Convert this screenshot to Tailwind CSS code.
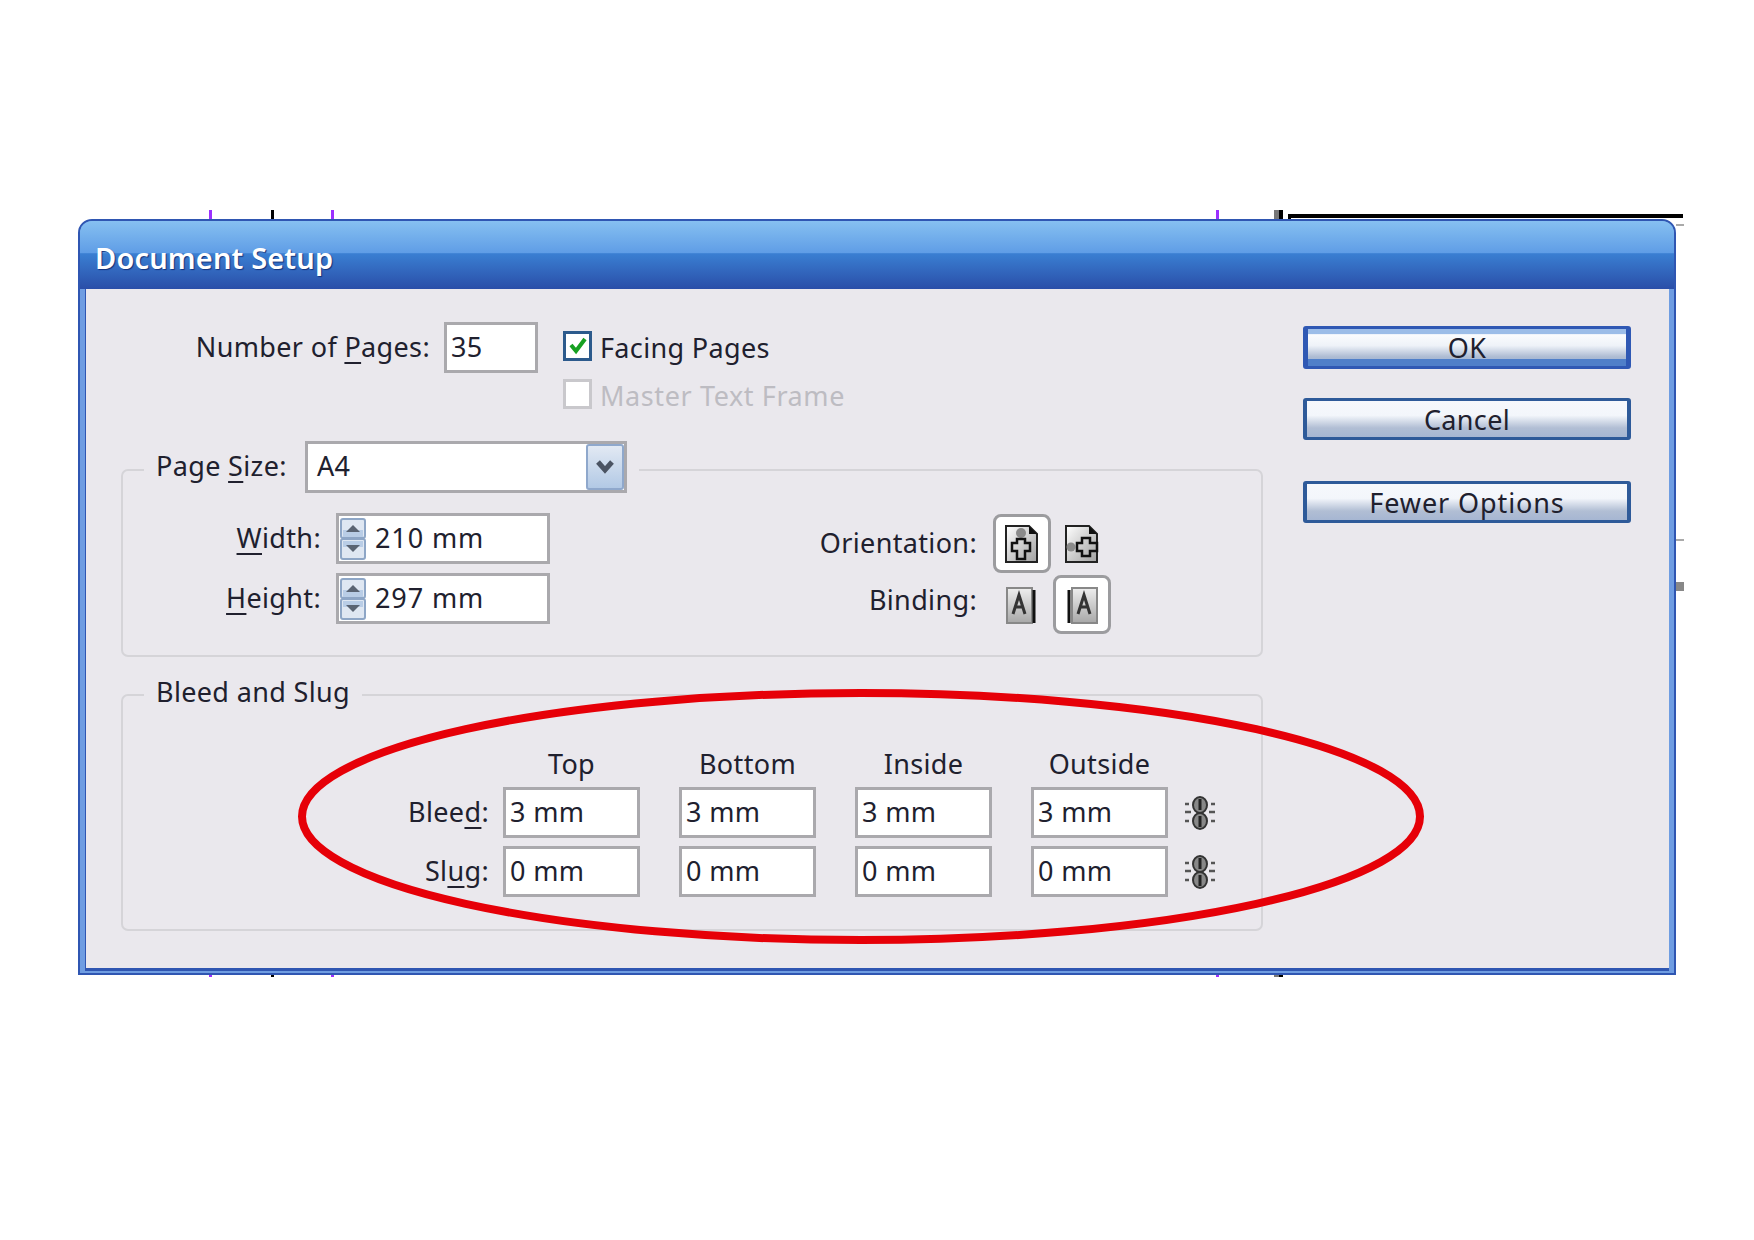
<!doctype html>
<html><head><meta charset="utf-8"><script src="https://cdn.jsdelivr.net/npm/@tailwindcss/browser@4"></script></head>
<body class="m-0 bg-white">
<div class="relative w-[1754px] h-[1240px] overflow-hidden bg-white font-['Noto_Sans','Liberation_Sans',sans-serif] text-[27px] tracking-[0.35px] leading-none text-[#20202e]">
  <!-- artwork behind the dialog -->
  <div class="absolute left-[209px] top-[210px] w-[3px] h-[767px] bg-[#9b30ff]"></div>
  <div class="absolute left-[271px] top-[210px] w-[3px] h-[767px] bg-black"></div>
  <div class="absolute left-[331px] top-[210px] w-[3px] h-[767px] bg-[#9b30ff]"></div>
  <div class="absolute left-[1216px] top-[210px] w-[3px] h-[767px] bg-[#9b30ff]"></div>
  <div class="absolute left-[1274px] top-[210px] w-[5px] h-[767px] bg-[#777]"></div>
  <div class="absolute left-[1279px] top-[210px] w-[4px] h-[767px] bg-black"></div>
  <div class="absolute left-[1288px] top-[214px] w-[395px] h-[10px] border-t-[4px] border-l-[3px] border-black"></div>
  <div class="absolute left-[1676px] top-[224px] w-[8px] h-[2px] bg-[#aaa]"></div>
  <div class="absolute left-[1676px] top-[539px] w-[8px] h-[2px] bg-[#aaa]"></div>
  <div class="absolute left-[1676px] top-[582px] w-[8px] h-[9px] bg-[#888]"></div>

  <!-- dialog -->
  <div class="relative ml-[78px] top-[219px] w-[1598px] h-[756px] rounded-t-[14px] border-2 border-[#2f56b2] bg-[#6f9de2] overflow-hidden flex flex-col">
    <div class="h-[68px] pl-[15px] pr-[6px] pt-[4px] flex items-center shrink-0 bg-[linear-gradient(to_bottom,#86c0f1_0%,#5f9de6_47%,#3a7fd2_48%,#2a4ea8_100%)]">
      <span class="text-[29px] font-semibold text-white [text-shadow:1px_1px_1px_#12307a] tracking-[0.15px]">Document Setup</span>
    </div>
    <div class="ml-[5px] mr-[5px] h-[682px] flex bg-[#eae8ed] border-l-[1px] border-b-[3px] border-[#2f56b2]">
      <!-- left column -->
      <div class="ml-[35px] w-[1142px]">
        <div class="mt-[33px] flex items-start">
          <div class="w-[309px] h-[51px] pb-[3px] flex items-center justify-end">Number of&nbsp;<span class="underline underline-offset-[5px] decoration-2">P</span>ages:</div>
          <div class="ml-[14px] w-[94px] h-[51px] pb-[3px] border-[3px] border-[#aaa9ad] bg-white flex items-center pl-[4px]">35</div>
          <div class="ml-[25px] pt-[9px] flex flex-col gap-[18px]">
            <div class="flex items-center h-[30px] gap-[8px]">
              <div class="w-[29px] h-[30px] border-[3px] border-[#2c5a8c] bg-white flex items-center justify-center">
                <svg width="20" height="20" viewBox="0 0 20 20"><path d="M3 9 L8 15 L17 3" fill="none" stroke="#17a022" stroke-width="4"/></svg>
              </div>
              <span class="pt-[3px]">Facing Pages</span>
            </div>
            <div class="flex items-center h-[30px] gap-[8px]">
              <div class="w-[29px] h-[30px] border-[3px] border-[#c9c8cc] bg-white"></div>
              <span class="pt-[3px] tracking-[0.6px] text-[#bdbcc2]">Master Text Frame</span>
            </div>
          </div>
        </div>

        <!-- Page Size group -->
        <div class="mt-[60px] h-[188px] border-2 border-[#d5d4d8] rounded-[7px]">
          <div class="-mt-[30px] ml-[21px] w-fit px-[12px] flex items-center bg-[#eae8ed]">
            <div class="w-[133px] pb-[3px] whitespace-nowrap">Page <span class="underline underline-offset-[5px] decoration-2">S</span>ize:</div>
            <div class="ml-[16px] w-[322px] h-[52px] border-[3px] border-[#aaa9ad] bg-white flex items-center justify-between pl-[9px]">
              <span class="pb-[3px]">A4</span>
              <div class="w-[38px] h-[46px] border-2 border-[#8fa8cc] rounded-[3px] bg-[linear-gradient(to_bottom,#e2e9f3,#b2c9e5)] flex items-center justify-center">
                <svg width="20" height="14" viewBox="0 0 20 14"><path d="M3 2 L10 10 L17 2" fill="none" stroke="#4b5463" stroke-width="5"/></svg>
              </div>
            </div>
          </div>
          <div class="mt-[20px] flex items-start">
            <div class="flex flex-col gap-[9px]">
              <div class="flex items-center">
                <div class="w-[198px] pb-[3px] text-right"><span class="underline underline-offset-[5px] decoration-2">W</span>idth:</div>
                <div class="ml-[15px] w-[214px] h-[51px] border-[3px] border-[#aaa9ad] bg-white flex items-center gap-[8px]">
                  <svg width="28" height="42" viewBox="0 0 28 42"><rect x="2" y="1" width="24" height="19" rx="2" fill="#dfe7f2" stroke="#8ea6c6" stroke-width="2"/><rect x="2" y="21" width="24" height="20" rx="2" fill="#dfe7f2" stroke="#8ea6c6" stroke-width="2"/><rect x="4" y="12" width="20" height="7" fill="#b9cde6"/><rect x="4" y="23" width="20" height="6" fill="#b9cde6"/><path d="M14 7 L21 14 H7 Z" fill="#5a6473"/><path d="M7 27 H21 L14 34 Z" fill="#5a6473"/></svg>
                  <span class="pb-[3px] tracking-[0.9px]">210 mm</span>
                </div>
              </div>
              <div class="flex items-center">
                <div class="w-[198px] pb-[3px] text-right"><span class="underline underline-offset-[5px] decoration-2">H</span>eight:</div>
                <div class="ml-[15px] w-[214px] h-[51px] border-[3px] border-[#aaa9ad] bg-white flex items-center gap-[8px]">
                  <svg width="28" height="42" viewBox="0 0 28 42"><rect x="2" y="1" width="24" height="19" rx="2" fill="#dfe7f2" stroke="#8ea6c6" stroke-width="2"/><rect x="2" y="21" width="24" height="20" rx="2" fill="#dfe7f2" stroke="#8ea6c6" stroke-width="2"/><rect x="4" y="12" width="20" height="7" fill="#b9cde6"/><rect x="4" y="23" width="20" height="6" fill="#b9cde6"/><path d="M14 7 L21 14 H7 Z" fill="#5a6473"/><path d="M7 27 H21 L14 34 Z" fill="#5a6473"/></svg>
                  <span class="pb-[3px] tracking-[0.9px]">297 mm</span>
                </div>
              </div>
            </div>
            <div class="ml-[127px] flex flex-col">
              <div class="mt-[1px] flex items-center">
                <div class="w-[300px] pb-[2px] text-right">Orientation:</div>
                <div class="ml-[16px] w-[58px] h-[59px] border-[3px] border-[#9c9c9f] rounded-[8px] bg-white flex items-center justify-center">
                  <svg class="mt-[3px]" width="36" height="42" viewBox="0 0 36 42"><defs><linearGradient id="pg1" x1="0" y1="0" x2="1" y2="1"><stop offset="0" stop-color="#fff"/><stop offset="1" stop-color="#a0a0a0"/></linearGradient></defs><path d="M2 2 H25 L33 10 V38 H2 Z" fill="url(#pg1)" stroke="#222" stroke-width="2"/><path d="M25 2 V10 H33 Z" fill="#111"/><circle cx="17" cy="9" r="5" fill="#8a8a8a"/><path d="M13 15 H21 V19 H26 V27 H21 V35 H13 V27 H8 V19 H13 Z" fill="none" stroke="#111" stroke-width="2.5"/></svg>
                </div>
                <div class="ml-[2px] w-[58px] h-[59px] flex items-center justify-center">
                  <svg class="mt-[3px]" width="36" height="42" viewBox="0 0 36 42"><defs><linearGradient id="pg2" x1="0" y1="0" x2="1" y2="1"><stop offset="0" stop-color="#fff"/><stop offset="1" stop-color="#a0a0a0"/></linearGradient></defs><path d="M2 2 H25 L33 10 V38 H2 Z" fill="url(#pg2)" stroke="#222" stroke-width="2"/><path d="M25 2 V10 H33 Z" fill="#111"/><circle cx="7" cy="23" r="4.5" fill="#8a8a8a"/><path d="M13 19 H18 V14 H26 V19 H33 V27 H26 V32 H18 V27 H13 Z" fill="none" stroke="#111" stroke-width="2.5"/></svg>
                </div>
              </div>
              <div class="mt-[2px] flex items-center">
                <div class="w-[300px] pb-[11px] text-right">Binding:</div>
                <div class="ml-[16px] w-[58px] h-[59px] flex items-center justify-center">
                  <svg class="mt-[3px]" width="32" height="38" viewBox="0 0 32 38"><defs><linearGradient id="pg3" x1="0" y1="0" x2="0" y2="1"><stop offset="0" stop-color="#eee"/><stop offset="1" stop-color="#a8a8a8"/></linearGradient></defs><rect x="1" y="1" width="25" height="35" fill="url(#pg3)" stroke="#888" stroke-width="2"/><path d="M28 3 V36" stroke="#111" stroke-width="3"/><path d="M7 27 L13 8 L19 27 M9 20 H17" fill="none" stroke="#333" stroke-width="3"/></svg>
                </div>
                <div class="ml-[2px] w-[58px] h-[59px] border-[3px] border-[#9c9c9f] rounded-[8px] bg-white flex items-center justify-center">
                  <svg class="mt-[3px]" width="32" height="38" viewBox="0 0 32 38"><defs><linearGradient id="pg4" x1="0" y1="0" x2="0" y2="1"><stop offset="0" stop-color="#eee"/><stop offset="1" stop-color="#a8a8a8"/></linearGradient></defs><rect x="6" y="1" width="25" height="35" fill="url(#pg4)" stroke="#888" stroke-width="2"/><path d="M3 3 V36" stroke="#111" stroke-width="3"/><path d="M12 27 L18 8 L24 27 M14 20 H22" fill="none" stroke="#333" stroke-width="3"/></svg>
                </div>
              </div>
            </div>
          </div>
        </div>

        <!-- Bleed and Slug group -->
        <div class="mt-[37px] h-[237px] border-2 border-[#d5d4d8] rounded-[7px]">
          <div class="-mt-[20px] ml-[21px] w-fit h-[30px] px-[12px] flex items-center bg-[#eae8ed]">Bleed and Slug</div>
          <div class="mt-[42px] flex h-[30px] items-center">
            <div class="w-[366px] mr-[14px]"></div>
            <div class="w-[137px] text-center">Top</div>
            <div class="ml-[39px] w-[137px] text-center">Bottom</div>
            <div class="ml-[39px] w-[137px] text-center">Inside</div>
            <div class="ml-[39px] w-[137px] text-center">Outside</div>
          </div>
          <div class="mt-[9px] flex items-center h-[51px]">
            <div class="w-[366px] mr-[14px] pb-[3px] text-right">Blee<span class="underline underline-offset-[5px] decoration-2">d</span>:</div>
            <div class="w-[137px] h-[51px] pb-[3px] border-[3px] border-[#aaa9ad] bg-white flex items-center pl-[4px]">3 mm</div>
            <div class="ml-[39px] w-[137px] h-[51px] pb-[3px] border-[3px] border-[#aaa9ad] bg-white flex items-center pl-[4px]">3 mm</div>
            <div class="ml-[39px] w-[137px] h-[51px] pb-[3px] border-[3px] border-[#aaa9ad] bg-white flex items-center pl-[4px]">3 mm</div>
            <div class="ml-[39px] w-[137px] h-[51px] pb-[3px] border-[3px] border-[#aaa9ad] bg-white flex items-center pl-[4px]">3 mm</div>
            <svg class="ml-[16px]" width="32" height="34" viewBox="0 0 32 34"><ellipse cx="16" cy="9" rx="7" ry="8" fill="#888" stroke="#333" stroke-width="2"/><ellipse cx="16" cy="25" rx="7" ry="8" fill="#888" stroke="#333" stroke-width="2"/><path d="M16 3 V14 M16 20 V31" stroke="#222" stroke-width="3"/><path d="M1 8 H5 M27 8 H31 M1 16 H7 M25 16 H31 M1 25 H5 M27 25 H31" stroke="#555" stroke-width="2.5"/></svg>
          </div>
          <div class="mt-[8px] flex items-center h-[51px]">
            <div class="w-[366px] mr-[14px] pb-[3px] text-right">Sl<span class="underline underline-offset-[5px] decoration-2">u</span>g:</div>
            <div class="w-[137px] h-[51px] pb-[3px] border-[3px] border-[#aaa9ad] bg-white flex items-center pl-[4px]">0 mm</div>
            <div class="ml-[39px] w-[137px] h-[51px] pb-[3px] border-[3px] border-[#aaa9ad] bg-white flex items-center pl-[4px]">0 mm</div>
            <div class="ml-[39px] w-[137px] h-[51px] pb-[3px] border-[3px] border-[#aaa9ad] bg-white flex items-center pl-[4px]">0 mm</div>
            <div class="ml-[39px] w-[137px] h-[51px] pb-[3px] border-[3px] border-[#aaa9ad] bg-white flex items-center pl-[4px]">0 mm</div>
            <svg class="ml-[16px]" width="32" height="34" viewBox="0 0 32 34"><ellipse cx="16" cy="9" rx="7" ry="8" fill="#888" stroke="#333" stroke-width="2"/><ellipse cx="16" cy="25" rx="7" ry="8" fill="#888" stroke="#333" stroke-width="2"/><path d="M16 3 V14 M16 20 V31" stroke="#222" stroke-width="3"/><path d="M1 8 H5 M27 8 H31 M1 16 H7 M25 16 H31 M1 25 H5 M27 25 H31" stroke="#555" stroke-width="2.5"/></svg>
          </div>
        </div>
      </div>

      <!-- buttons -->
      <div class="ml-[40px] w-[328px] pt-[37px] flex flex-col">
        <div class="h-[43px] rounded-[3px] border-x-[5px] border-t-[3px] border-b-[3px] border-[#2f58b4] bg-[linear-gradient(to_bottom,#9cbde8_0%,#9cbde8_14%,#fbfcfe_15%,#eef2f8_45%,#aebcd3_75%,#a8b9d4_80%,#4f7fc9_81%,#4f7fc9_100%)] flex items-center justify-center">OK</div>
        <div class="mt-[29px] h-[42px] rounded-[3px] border-x-[4px] border-y-[3px] border-[#2e5a99] bg-[linear-gradient(to_bottom,#f6f8fc_0%,#f3f6fb_40%,#b1bed4_75%,#a6b6d2_100%)] flex items-center justify-center">Cancel</div>
        <div class="mt-[41px] h-[42px] rounded-[3px] border-x-[4px] border-y-[3px] border-[#2e5a99] bg-[linear-gradient(to_bottom,#f6f8fc_0%,#f3f6fb_40%,#b1bed4_75%,#a6b6d2_100%)] flex items-center justify-center tracking-[0.9px]">Fewer Options</div>
      </div>
    </div>
  </div>

  <!-- red annotation -->
  <svg class="absolute left-0 top-0 pointer-events-none" width="1754" height="1240"><ellipse cx="861" cy="816.5" rx="559" ry="123.5" fill="none" stroke="#e60008" stroke-width="8"/></svg>
</div>
</body></html>
